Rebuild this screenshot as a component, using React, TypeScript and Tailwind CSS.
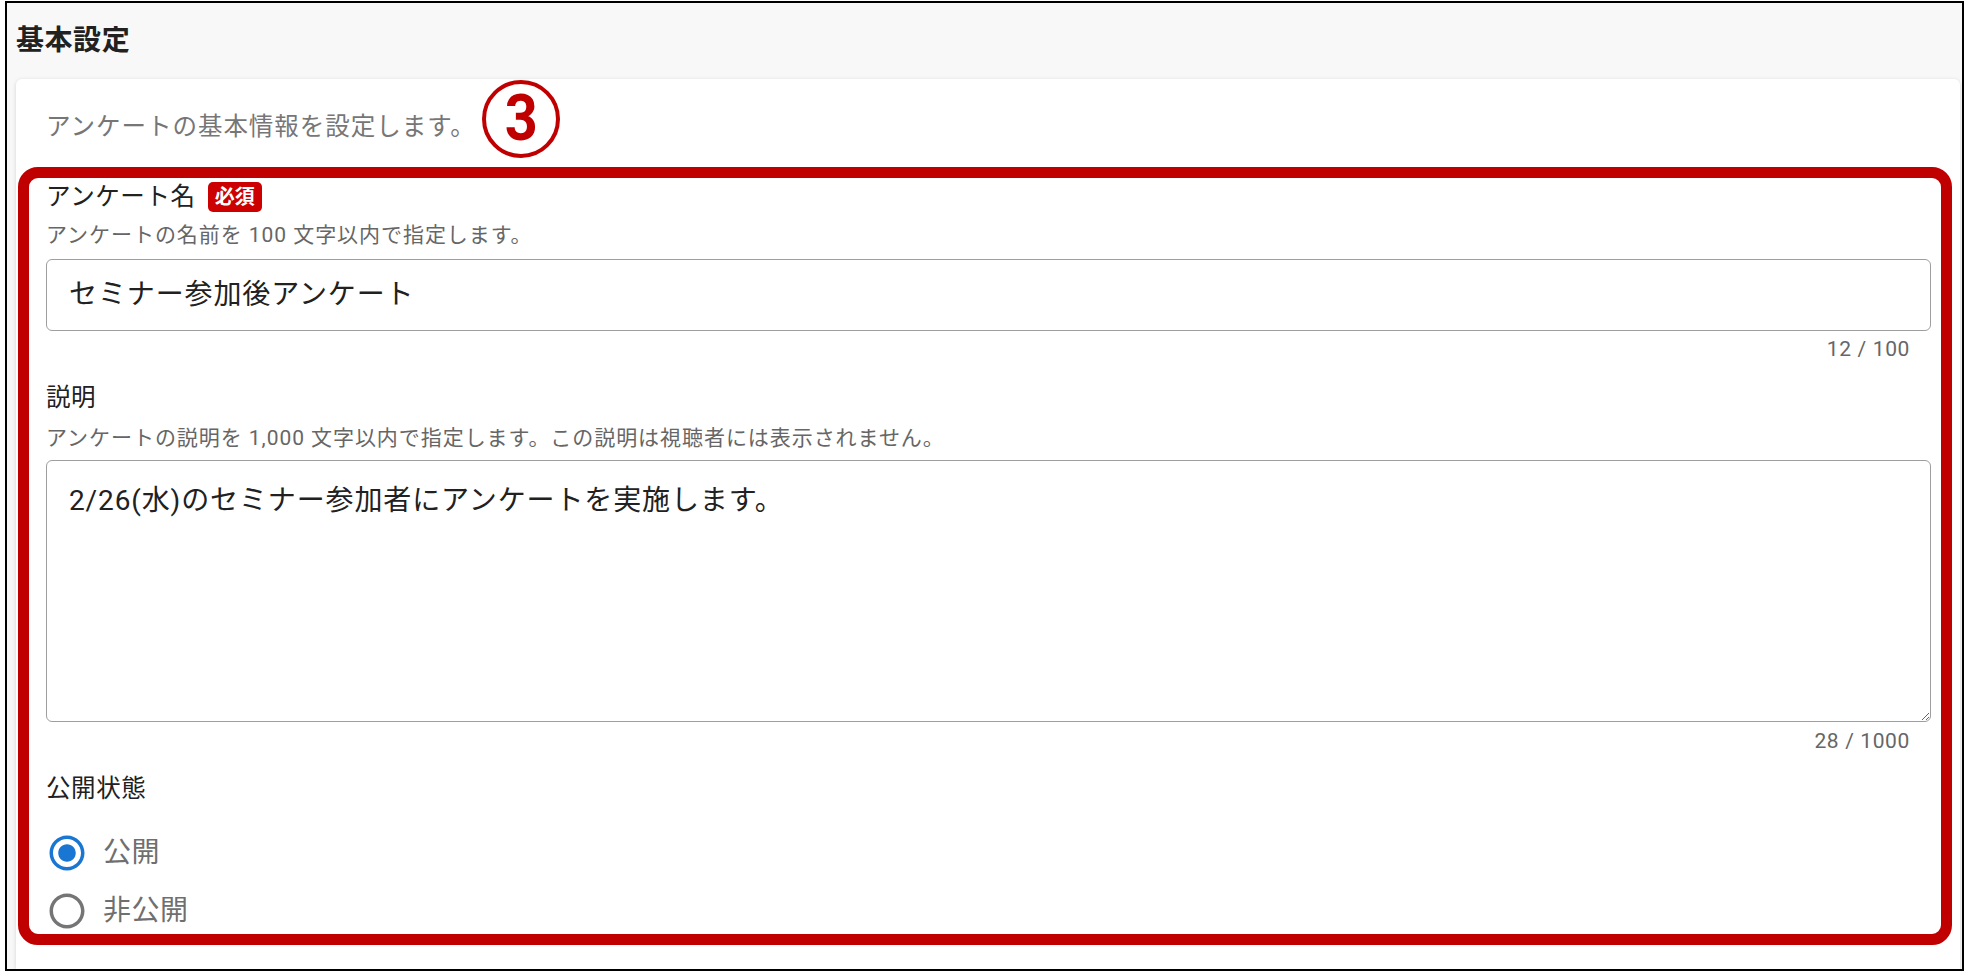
const font = "font-['Roboto','Noto_Sans_CJK_JP',sans-serif]";

function Radio({ checked, label }: { checked: boolean; label: string }) {
  return (
    <div className="flex h-[42px] items-center">
      <svg width="42" height="42" viewBox="0 0 24 24" className="shrink-0">
        {checked ? (
          <path
            fill="#1976d2"
            d="M12 7c-2.76 0-5 2.24-5 5s2.24 5 5 5 5-2.24 5-5-2.24-5-5-5zm0-5C6.48 2 2 6.48 2 12s4.48 10 10 10 10-4.48 10-10S17.52 2 12 2zm0 18c-4.42 0-8-3.58-8-8s3.58-8 8-8 8 3.58 8 8-3.58 8-8 8z"
          />
        ) : (
          <path
            fill="#757575"
            d="M12 2C6.48 2 2 6.48 2 12s4.48 10 10 10 10-4.48 10-10S17.52 2 12 2zm0 18c-4.42 0-8-3.58-8-8s3.58-8 8-8 8 3.58 8 8-3.58 8-8 8z"
          />
        )}
      </svg>
      <span className="ml-[15px] text-[28px] leading-[42px] tracking-[0.02em] text-[#6f6f6f]">{label}</span>
    </div>
  );
}

export default function App() {
  return (
    <div className={`w-[1970px] h-[976px] bg-white pl-[5px] pt-[1px] ${font}`}>
      <div className="flex h-[970px] w-[1959px] flex-col overflow-hidden border-2 border-black bg-[#f8f8f8]">
        {/* header */}
        <div className="flex h-[76px] shrink-0 items-center pl-[9px]">
          <h1 className="text-[28px] font-bold leading-none tracking-[0.02em] text-[#212121]">基本設定</h1>
        </div>

        {/* card */}
        <div className="relative ml-[9px] mr-[2px] flex-1 rounded-t-[6px] bg-white pt-[29px] shadow-[0_1px_4px_rgba(0,0,0,0.15)]">
          <p className="pl-[30px] text-[24.5px] leading-[37px] tracking-[0.04em] text-[#767676]">
            アンケートの基本情報を設定します。
          </p>

          {/* annotation number */}
          <div className="absolute left-[466px] top-[1px] flex h-[78px] w-[78px] items-center justify-center rounded-full border-[4px] border-[#c00000]">
            <span className="scale-x-[0.9] text-[64px] font-bold leading-none text-[#c00000]">3</span>
          </div>

          {/* highlighted form area */}
          <div className="ml-[2px] mt-[22px] flex h-[778px] w-[1934px] flex-col rounded-[20px] border-[11px] border-[#c00000] pl-[17px] pr-[10px]">
            <div className="mt-[4px] flex h-[30px] items-center">
              <span className="text-[24.5px] leading-[30px] tracking-[0.025em] text-[#212121]">アンケート名</span>
              <span className="ml-[12px] flex h-[30px] items-center rounded-[5px] bg-[#cc0000] px-[7px] text-[20px] font-bold leading-none text-white">
                必須
              </span>
            </div>
            <p className="mt-[8px] text-[21px] leading-[30px] tracking-[0.045em] text-[#666666]">
              アンケートの名前を 100 文字以内で指定します。
            </p>
            <div className="mt-[9px] flex h-[72px] items-center rounded-[6px] border border-[#9e9e9e] pl-[22px]">
              <span className="text-[28px] leading-none tracking-[0.03125em] text-[#212121]">セミナー参加後アンケート</span>
            </div>
            <div className="mt-[4px] pr-[21px] text-right text-[21px] leading-[28px] tracking-[0.03em] text-[#666666]">12 / 100</div>

            <div className="mt-[17px] text-[24.5px] leading-[36px] tracking-[0.025em] text-[#212121]">説明</div>
            <p className="mt-[7px] text-[21px] leading-[30px] tracking-[0.045em] text-[#666666]">
              アンケートの説明を 1,000 文字以内で指定します。この説明は視聴者には表示されません。
            </p>
            <textarea
              readOnly
              value="2/26(水)のセミナー参加者にアンケートを実施します。"
              className={`mt-[7px] h-[262px] w-full resize-y rounded-[6px] border border-[#9e9e9e] pl-[22px] pt-[19px] text-[28px] leading-[42px] tracking-[0.03125em] text-[#212121] outline-none ${font}`}
            />
            <div className="mt-[5px] pr-[21px] text-right text-[21px] leading-[28px] tracking-[0.03em] text-[#666666]">28 / 1000</div>

            <div className="mt-[16px] text-[24.5px] leading-[36px] tracking-[0.025em] text-[#212121]">公開状態</div>
            <div className="mt-[25px]">
              <Radio checked label="公開" />
            </div>
            <div className="mt-[16px]">
              <Radio checked={false} label="非公開" />
            </div>
          </div>
        </div>
      </div>
    </div>
  );
}
